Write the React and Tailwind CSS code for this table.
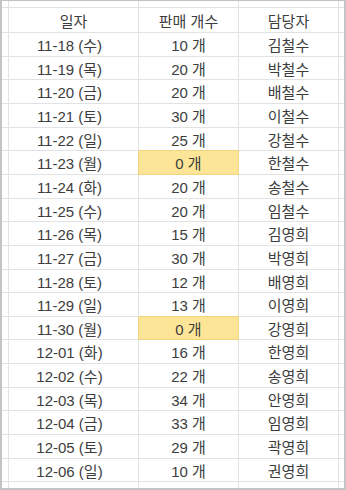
import React from "react";

const rows = [
  ["11-18 (수)", "10 개", "김철수"],
  ["11-19 (목)", "20 개", "박철수"],
  ["11-20 (금)", "20 개", "배철수"],
  ["11-21 (토)", "30 개", "이철수"],
  ["11-22 (일)", "25 개", "강철수"],
  ["11-23 (월)", "0 개", "한철수", true],
  ["11-24 (화)", "20 개", "송철수"],
  ["11-25 (수)", "20 개", "임철수"],
  ["11-26 (목)", "15 개", "김영희"],
  ["11-27 (금)", "30 개", "박영희"],
  ["11-28 (토)", "12 개", "배영희"],
  ["11-29 (일)", "13 개", "이영희"],
  ["11-30 (월)", "0 개", "강영희", true],
  ["12-01 (화)", "16 개", "한영희"],
  ["12-02 (수)", "22 개", "송영희"],
  ["12-03 (목)", "34 개", "안영희"],
  ["12-04 (금)", "33 개", "임영희"],
  ["12-05 (토)", "29 개", "곽영희"],
  ["12-06 (일)", "10 개", "권영희"],
];

const cell = "border-r border-b border-[#e2e2e2]";
const txt = "flex items-center justify-center pt-[2px] text-[15px] leading-none text-[#3d3d3d]";

export default function App() {
  return (
    <div
      className="w-[346px] h-[490px] bg-white border-l-2 border-r-2 border-t border-b-2 border-[#c4c4c4] overflow-hidden"
      style={{ fontFamily: '"Liberation Sans", "Noto Sans CJK KR", Arial, sans-serif' }}
    >
      <div className="grid grid-cols-[7px_130px_100px_100px_5px] grid-rows-[7px_25px_24px_23px_24px_24px_23px_24px_24px_23px_24px_24px_23px_24px_23px_24px_24px_23px_24px_24px_23px_6px]">
        {/* partial top row */}
        <div className={cell} />
        <div className={cell} />
        <div className={cell} />
        <div className={cell} />
        <div className="border-b border-[#e2e2e2]" />

        {/* header */}
        <div className={cell} />
        <div className={`${cell} ${txt}`}>일자</div>
        <div className={`${cell} ${txt}`}>판매 개수</div>
        <div className={`${cell} ${txt}`}>담당자</div>
        <div className="border-b border-[#e2e2e2]" />

        {rows.map(([d, n, p, hl], i) => (
          <React.Fragment key={i}>
            <div className={cell} />
            <div className={`${cell} ${txt} pr-2`}>{d}</div>
            {hl ? (
              <div className={`border-r border-b border-[#efd57f] bg-[#fce596] shadow-[0_-1px_0_#efd57f,-1px_0_0_#efd57f] ${txt}`}>{n}</div>
            ) : (
              <div className={`${cell} ${txt}`}>{n}</div>
            )}
            <div className={`${cell} ${txt}`}>{p}</div>
            <div className="border-b border-[#e2e2e2]" />
          </React.Fragment>
        ))}

        {/* partial bottom row */}
        <div className="border-r border-[#e2e2e2]" />
        <div className="border-r border-[#e2e2e2]" />
        <div className="border-r border-[#e2e2e2]" />
        <div className="border-r border-[#e2e2e2]" />
        <div />
      </div>
    </div>
  );
}
